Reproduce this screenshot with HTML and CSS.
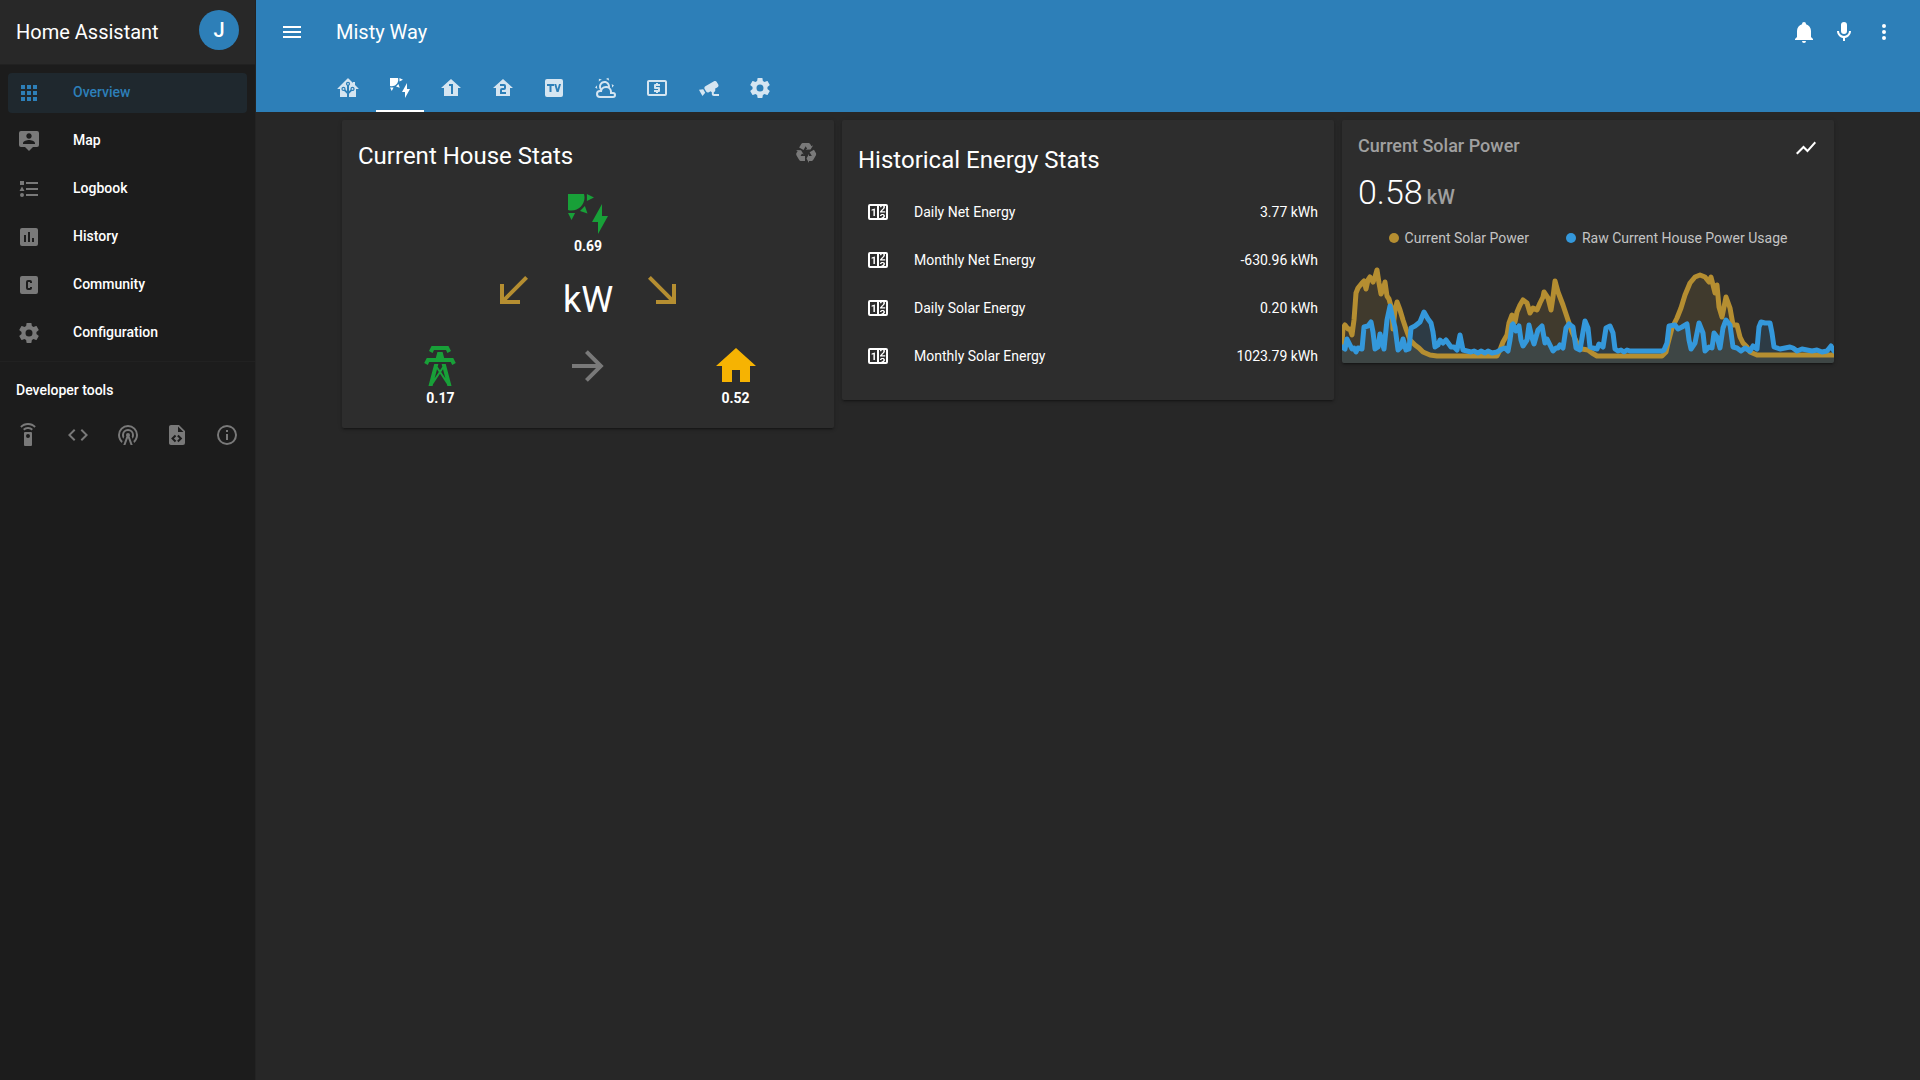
FILE: index.html
```html
<!DOCTYPE html>
<html lang="en">
<head>
<meta charset="utf-8">
<meta name="viewport" content="width=device-width, initial-scale=1">
<title>Misty Way - Home Assistant</title>
<link rel="stylesheet" href="styles.css">
</head>
<body>
<svg class="sprite" aria-hidden="true">
  <symbol id="cog" viewBox="0 0 24 24"><path d="M12,15.5A3.5,3.5 0 0,1 8.5,12A3.5,3.5 0 0,1 12,8.5A3.5,3.5 0 0,1 15.5,12A3.5,3.5 0 0,1 12,15.5M19.43,12.97C19.47,12.65 19.5,12.33 19.5,12C19.5,11.67 19.47,11.34 19.43,11L21.54,9.37C21.73,9.22 21.78,8.95 21.66,8.73L19.66,5.27C19.54,5.05 19.27,4.96 19.05,5.05L16.56,6.05C16.04,5.66 15.5,5.32 14.87,5.07L14.5,2.42C14.46,2.18 14.25,2 14,2H10C9.75,2 9.54,2.18 9.5,2.42L9.13,5.07C8.5,5.32 7.96,5.66 7.44,6.05L4.95,5.05C4.73,4.96 4.46,5.05 4.34,5.27L2.34,8.73C2.21,8.95 2.27,9.22 2.46,9.37L4.57,11C4.53,11.34 4.5,11.67 4.5,12C4.5,12.33 4.53,12.65 4.57,12.97L2.46,14.63C2.27,14.78 2.21,15.05 2.34,15.27L4.34,18.73C4.46,18.95 4.73,19.03 4.95,18.95L7.44,17.94C7.96,18.34 8.5,18.68 9.13,18.93L9.5,21.58C9.54,21.82 9.75,22 10,22H14C14.25,22 14.46,21.82 14.5,21.58L14.87,18.93C15.5,18.67 16.04,18.34 16.56,17.94L19.05,18.95C19.27,19.03 19.54,18.95 19.66,18.73L21.66,15.27C21.78,15.05 21.73,14.78 21.54,14.63L19.43,12.97Z"/></symbol>
  <symbol id="solar" viewBox="0 0 24 24"><path d="M11.45,2V5.55L15,3.77L11.45,2M10.45,8L8,10.46L11.75,11.71L10.45,8M2,11.45L3.77,15L5.55,11.45H2M10,2H2V10C2.57,10.17 3.17,10.25 3.77,10.25C7.35,10.26 10.26,7.35 10.27,3.75C10.26,3.16 10.17,2.57 10,2M17,22V16H14L19,7V13H22L17,22Z"/></symbol>
  <symbol id="counter" viewBox="0 0 24 24"><path d="M4,4H20A2,2 0 0,1 22,6V18A2,2 0 0,1 20,20H4A2,2 0 0,1 2,18V6A2,2 0 0,1 4,4M4,6V18H11V6H4M20,18V6H18.76C19,6.54 18.95,7.07 18.95,7.13C18.88,7.8 18.41,8.5 18.24,8.75L15.91,11.3L19.23,11.28L19.24,12.5L14.04,12.47L14,11.47C14,11.47 17.05,8.24 17.2,7.95C17.34,7.67 17.91,6 16.5,6C15.27,6.05 15.41,7.3 15.41,7.3L13.87,7.31C13.87,7.31 13.88,6.65 14.25,6H13V18H15.58L15.57,17.14L16.54,17.13C16.54,17.13 17.45,16.97 17.46,16.08C17.5,15.08 16.65,15.08 16.5,15.08C16.37,15.08 15.43,15.13 15.43,15.95H13.91C13.91,15.95 13.95,13.89 16.5,13.89C19.1,13.89 18.96,15.91 18.96,15.91C18.96,15.91 19,17.16 17.85,17.63L18.37,18H20M8.92,16H7.42V10.2L5.62,10.76V9.53L8.76,8.41H8.92V16Z"/></symbol>
</svg>

<div class="app">
  <aside class="sidebar">
    <div class="brand">
      <span class="brand-name">Home Assistant</span>
      <a class="avatar" href="#profile">J</a>
    </div>
    <nav class="menu" aria-label="Main">
      <a class="menu-item active" href="#overview"><svg class="icon" viewBox="0 0 24 24"><path d="M16,20H20V16H16M16,14H20V10H16M10,8H14V4H10M16,8H20V4H16M10,14H14V10H10M4,14H8V10H4M4,20H8V16H4M10,20H14V16H10M4,8H8V4H4V8Z"/></svg><span>Overview</span></a>
      <a class="menu-item" href="#map"><svg class="icon" viewBox="0 0 24 24"><path d="M20,2H4A2,2 0 0,0 2,4V16A2,2 0 0,0 4,18H8L12,22L16,18H20A2,2 0 0,0 22,16V4A2,2 0 0,0 20,2M12,4.3C13.5,4.3 14.7,5.5 14.7,7S13.5,9.7 12,9.7S9.3,8.5 9.3,7S10.5,4.3 12,4.3M18,15H6V14.1C6,12.1 10,11 12,11S18,12.1 18,14.1V15Z"/></svg><span>Map</span></a>
      <a class="menu-item" href="#logbook"><svg class="icon" viewBox="0 0 24 24"><path d="M5,9.5L7.5,14H2.5L5,9.5M3,4H7V8H3V4M5,20A2,2 0 0,0 7,18A2,2 0 0,0 5,16A2,2 0 0,0 3,18A2,2 0 0,0 5,20M9,5V7H21V5H9M9,19H21V17H9V19M9,13H21V11H9V13Z"/></svg><span>Logbook</span></a>
      <a class="menu-item" href="#history"><svg class="icon" viewBox="0 0 24 24"><path d="M19,3H5A2,2 0 0,0 3,5V19A2,2 0 0,0 5,21H19A2,2 0 0,0 21,19V5A2,2 0 0,0 19,3M9,17H7V10H9V17M13,17H11V7H13V17M17,17H15V13H17V17Z"/></svg><span>History</span></a>
      <a class="menu-item" href="#community"><svg class="icon" viewBox="0 0 24 24"><path d="M5,3H19A2,2 0 0,1 21,5V19A2,2 0 0,1 19,21H5A2,2 0 0,1 3,19V5A2,2 0 0,1 5,3M11,7A2,2 0 0,0 9,9V15A2,2 0 0,0 11,17H13A2,2 0 0,0 15,15V14H13V15H11V9H13V10H15V9A2,2 0 0,0 13,7H11Z"/></svg><span>Community</span></a>
      <a class="menu-item" href="#config"><svg class="icon"><use href="#cog"/></svg><span>Configuration</span></a>
    </nav>
    <section class="dev">
      <h2 class="dev-title">Developer tools</h2>
      <div class="dev-tools">
        <a href="#services" aria-label="Services"><svg class="icon" viewBox="0 0 24 24"><path d="M12,0C8.96,0 6.21,1.23 4.22,3.22L5.63,4.63C7.26,3 9.5,2 12,2C14.5,2 16.74,3 18.36,4.64L19.77,3.23C17.79,1.23 15.04,0 12,0M7.05,6.05L8.46,7.46C9.37,6.56 10.62,6 12,6C13.38,6 14.63,6.56 15.54,7.46L16.95,6.05C15.68,4.78 13.93,4 12,4C10.07,4 8.32,4.78 7.05,6.05M12,15A2,2 0 0,1 10,13A2,2 0 0,1 12,11A2,2 0 0,1 14,13A2,2 0 0,1 12,15M15,9H9A1,1 0 0,0 8,10V22A1,1 0 0,0 9,23H15A1,1 0 0,0 16,22V10A1,1 0 0,0 15,9Z"/></svg></a>
        <a href="#states" aria-label="States"><svg class="icon" viewBox="0 0 24 24"><path d="M14.6,16.6L19.2,12L14.6,7.4L16,6L22,12L16,18L14.6,16.6M9.4,16.6L4.8,12L9.4,7.4L8,6L2,12L8,18L9.4,16.6Z"/></svg></a>
        <a href="#events" aria-label="Events"><svg class="icon" viewBox="0 0 24 24"><path d="M12,10A2,2 0 0,1 14,12C14,12.5 13.82,12.94 13.53,13.29L16.7,22H14.57L12,14.93L9.43,22H7.3L10.47,13.29C10.18,12.94 10,12.5 10,12A2,2 0 0,1 12,10M12,8A4,4 0 0,0 8,12C8,12.5 8.1,13 8.28,13.46L7.4,15.86C6.53,14.81 6,13.47 6,12A6,6 0 0,1 12,6A6,6 0 0,1 18,12C18,13.47 17.47,14.81 16.6,15.86L15.72,13.46C15.9,13 16,12.5 16,12A4,4 0 0,0 12,8M12,4A8,8 0 0,0 4,12C4,14.36 5,16.5 6.64,17.94L5.92,19.94C3.54,18.11 2,15.23 2,12A10,10 0 0,1 12,2A10,10 0 0,1 22,12C22,15.23 20.46,18.11 18.08,19.94L17.36,17.94C19,16.5 20,14.36 20,12A8,8 0 0,0 12,4Z"/></svg></a>
        <a href="#templates" aria-label="Templates"><svg class="icon" viewBox="0 0 24 24"><path d="M13,9H18.5L13,3.5V9M6,2H14L20,8V20A2,2 0 0,1 18,22H6C4.89,22 4,21.1 4,20V4C4,2.89 4.89,2 6,2M6.12,15.5L9.86,19.24L11.28,17.83L8.95,15.5L11.28,13.17L9.86,11.76L6.12,15.5M17.28,15.5L13.54,11.76L12.12,13.17L14.45,15.5L12.12,17.83L13.54,19.24L17.28,15.5Z"/></svg></a>
        <a href="#info" aria-label="Info"><svg class="icon" viewBox="0 0 24 24"><path d="M11,9H13V7H11M12,20C7.59,20 4,16.41 4,12C4,7.59 7.59,4 12,4C16.41,4 20,7.59 20,12C20,16.41 16.41,20 12,20M12,2A10,10 0 0,0 2,12A10,10 0 0,0 12,22A10,10 0 0,0 22,12A10,10 0 0,0 12,2M11,17H13V11H11V17Z"/></svg></a>
      </div>
    </section>
  </aside>

  <div class="page">
    <header class="header">
      <div class="toolbar">
        <button class="icon-button" type="button" aria-label="Menu"><svg class="icon" viewBox="0 0 24 24"><path d="M3,6H21V8H3V6M3,11H21V13H3V11M3,16H21V18H3V16Z"/></svg></button>
        <h1 class="page-title">Misty Way</h1>
        <button class="icon-button" type="button" aria-label="Notifications"><svg class="icon" viewBox="0 0 24 24"><path d="M21,19V20H3V19L5,17V11C5,7.9 7.03,5.17 10,4.29C10,4.19 10,4.1 10,4A2,2 0 0,1 12,2A2,2 0 0,1 14,4C14,4.1 14,4.19 14,4.29C16.97,5.17 19,7.9 19,11V17L21,19M14,21A2,2 0 0,1 12,23A2,2 0 0,1 10,21"/></svg></button>
        <button class="icon-button" type="button" aria-label="Voice"><svg class="icon" viewBox="0 0 24 24"><path d="M12,2A3,3 0 0,1 15,5V11A3,3 0 0,1 12,14A3,3 0 0,1 9,11V5A3,3 0 0,1 12,2M19,11C19,14.53 16.39,17.44 13,17.93V21H11V17.93C7.61,17.44 5,14.53 5,11H7A5,5 0 0,0 12,16A5,5 0 0,0 17,11H19Z"/></svg></button>
        <button class="icon-button" type="button" aria-label="More"><svg class="icon" viewBox="0 0 24 24"><path d="M12,16A2,2 0 0,1 14,18A2,2 0 0,1 12,20A2,2 0 0,1 10,18A2,2 0 0,1 12,16M12,10A2,2 0 0,1 14,12A2,2 0 0,1 12,14A2,2 0 0,1 10,12A2,2 0 0,1 12,10M12,4A2,2 0 0,1 14,6A2,2 0 0,1 12,8A2,2 0 0,1 10,6A2,2 0 0,1 12,4Z"/></svg></button>
      </div>
      <nav class="tabs" aria-label="Views">
        <a class="tab" href="#home" aria-label="Home"><svg class="icon" viewBox="0 0 24 24"><path d="M21.8,13H20V21H13V17.67L15.79,14.88L16.5,15C17.66,15 18.6,14.06 18.6,12.9C18.6,11.74 17.66,10.8 16.5,10.8A2.1,2.1 0 0,0 14.4,12.9L14.5,13.61L13,15.13V9.65C13.66,9.29 14.1,8.6 14.1,7.8A2.1,2.1 0 0,0 12,5.7A2.1,2.1 0 0,0 9.9,7.8C9.9,8.6 10.34,9.29 11,9.65V15.13L9.5,13.61L9.6,12.9A2.1,2.1 0 0,0 7.5,10.8A2.1,2.1 0 0,0 5.4,12.9A2.1,2.1 0 0,0 7.5,15L8.21,14.88L11,17.67V21H4V13H2.25C1.83,13 1.42,13 1.42,12.79C1.43,12.57 1.85,12.15 2.28,11.72L11,3C11.33,2.67 11.67,2.33 12,2.33C12.33,2.33 12.67,2.67 13,3L17,7V6H19V9L21.78,11.78C22.18,12.18 22.59,12.59 22.6,12.8C22.6,13 22.2,13 21.8,13M7.5,12A0.9,0.9 0 0,1 8.4,12.9A0.9,0.9 0 0,1 7.5,13.8A0.9,0.9 0 0,1 6.6,12.9A0.9,0.9 0 0,1 7.5,12M16.5,12C17,12 17.4,12.4 17.4,12.9C17.4,13.4 17,13.8 16.5,13.8A0.9,0.9 0 0,1 15.6,12.9A0.9,0.9 0 0,1 16.5,12M12,6.9C12.5,6.9 12.9,7.3 12.9,7.8C12.9,8.3 12.5,8.7 12,8.7C11.5,8.7 11.1,8.3 11.1,7.8C11.1,7.3 11.5,6.9 12,6.9Z"/></svg></a>
        <a class="tab selected" href="#energy" aria-label="Energy" aria-current="page"><svg class="icon"><use href="#solar"/></svg></a>
        <a class="tab" href="#floor1" aria-label="First floor"><svg class="icon" viewBox="0 0 24 24"><path d="M12,3L2,12H5V20H19V12H22L12,3M10,8H14V18H12V10H10V8Z"/></svg></a>
        <a class="tab" href="#floor2" aria-label="Second floor"><svg class="icon" viewBox="0 0 24 24"><path d="M12,3L2,12H5V20H19V12H22L12,3M9,8H13A2,2 0 0,1 15,10V12A2,2 0 0,1 13,14H11V16H15V18H9V14A2,2 0 0,1 11,12H13V10H9V8Z"/></svg></a>
        <a class="tab" href="#media" aria-label="Media"><svg class="icon" viewBox="0 0 24 24"><path fill-rule="evenodd" d="M5,3H19A2,2 0 0,1 21,5V19A2,2 0 0,1 19,21H5A2,2 0 0,1 3,19V5A2,2 0 0,1 5,3M5,8V10H7.5V16H9.5V10H12V8H5M12.2,8L14.6,16H16.6L19,8H17L15.6,13L14.2,8H12.2Z"/></svg></a>
        <a class="tab" href="#weather" aria-label="Weather"><svg class="icon" viewBox="0 0 24 24"><path d="M12.74,5.47C15.1,6.5 16.35,9.03 15.92,11.46C17.19,12.56 18,14.19 18,16V16.17C18.31,16.06 18.65,16 19,16A3,3 0 0,1 22,19A3,3 0 0,1 19,22H6A4,4 0 0,1 2,18A4,4 0 0,1 6,14H6.27C5,12.45 4.6,10.24 5.5,8.26C6.72,5.5 9.97,4.24 12.74,5.47M11.93,7.3C10.16,6.5 8.09,7.31 7.31,9.07C6.85,10.09 6.93,11.22 7.41,12.13C8.5,10.83 10.16,10 12,10C12.7,10 13.38,10.12 14,10.34C13.94,9.06 13.18,7.86 11.93,7.3M13.55,3.64C13,3.4 12.45,3.23 11.88,3.12L14.37,1.82L15.27,4.71C14.76,4.29 14.19,3.93 13.55,3.64M6.09,4.44C5.6,4.79 5.17,5.19 4.8,5.63L4.91,2.82L7.87,3.5C7.25,3.71 6.65,4.03 6.09,4.44M18,9.71C17.91,9.12 17.78,8.55 17.59,8L19.97,9.5L17.92,11.73C18.03,11.08 18.05,10.4 18,9.71M3.04,11.3C3.11,11.9 3.24,12.47 3.43,13L1.06,11.5L3.1,9.28C2.97,9.93 2.97,10.61 3.04,11.3M19,18H16V16A4,4 0 0,0 12,12A4,4 0 0,0 8,16H6A2,2 0 0,0 4,18A2,2 0 0,0 6,20H19A1,1 0 0,0 20,19A1,1 0 0,0 19,18Z"/></svg></a>
        <a class="tab" href="#money" aria-label="Money"><svg class="icon" viewBox="0 0 24 24"><path d="M20,18H4V6H20M20,4H4C2.89,4 2,4.89 2,6V18A2,2 0 0,0 4,20H20A2,2 0 0,0 22,18V6C22,4.89 21.1,4 20,4M11,17H13V16H14A1,1 0 0,0 15,15V12A1,1 0 0,0 14,11H11V10H15V8H13V7H11V8H10A1,1 0 0,0 9,9V12A1,1 0 0,0 10,13H13V14H9V16H11V17Z"/></svg></a>
        <a class="tab" href="#cameras" aria-label="Cameras"><svg class="icon" viewBox="0 0 24 24"><path d="M18.15,4.94C17.77,4.91 17.37,5 17,5.2L8.35,10.2C7.39,10.76 7.07,12 7.62,12.94L9.12,15.53C9.67,16.5 10.89,16.82 11.85,16.27L13.65,15.23C13.92,15.69 14.32,16.06 14.81,16.27V18.04C14.81,19.13 15.7,20 16.81,20H22V18.04H16.81V16.27C17.72,15.87 18.31,14.97 18.31,14C18.31,13.54 18.19,13.11 17.97,12.73L20.5,11.27C21.47,10.71 21.8,9.5 21.24,8.53L19.74,5.94C19.4,5.34 18.79,5 18.15,4.94M6.22,13.17L2,13.87L2.75,15.17L4.75,18.63L5.5,19.93L8.22,16.63L6.22,13.17Z"/></svg></a>
        <a class="tab" href="#settings" aria-label="Settings"><svg class="icon"><use href="#cog"/></svg></a>
      </nav>
    </header>

    <main class="cards">
      <section class="card house">
        <div class="house-head">
          <h2 class="card-title">Current House Stats</h2>
          <svg class="icon muted" viewBox="0 0 24 24"><path d="M21.82,15.42L19.32,19.75C18.83,20.61 17.92,21.06 17,21H15V23L12.5,18.5L15,14V16H17.82L15.6,12.15L19.93,9.65L21.73,12.77C22.25,13.54 22.32,14.57 21.82,15.42M9.21,3.06H14.21C15.19,3.06 16.04,3.63 16.45,4.45L17.45,6.19L19.18,5.19L16.54,9.6L11.39,9.69L13.12,8.69L11.71,6.24L9.5,10.09L5.16,7.59L6.96,4.47C7.37,3.64 8.22,3.06 9.21,3.06M5.05,19.76L2.55,15.43C2.06,14.58 2.13,13.56 2.64,12.79L3.64,11.06L1.91,10.06L7.05,10.14L9.7,14.56L7.97,13.56L6.56,16H11V21H7.4C6.47,21.07 5.55,20.61 5.05,19.76Z"/></svg>
        </div>
        <div class="flow">
          <div class="node solar"><svg class="big green"><use href="#solar"/></svg><span>0.69</span></div>
          <svg class="big gold to-grid" viewBox="0 0 24 24"><path d="M19,6.41L17.59,5L7,15.59V9H5V19H15V17H8.41L19,6.41Z"/></svg>
          <span class="unit">kW</span>
          <svg class="big gold to-house" viewBox="0 0 24 24"><path d="M5,6.41L6.41,5L17,15.59V9H19V19H9V17H15.59L5,6.41Z"/></svg>
          <div class="node grid"><svg class="big green" viewBox="0 0 24 24"><path d="M8.28,5.45L6.5,4.55L7.76,2H16.23L17.5,4.55L15.72,5.44L15,4H9L8.28,5.45M18.62,8H14.09L13.3,5H10.7L9.91,8H5.38L4.1,10.55L5.89,11.44L6.62,10H17.38L18.1,11.45L19.89,10.56L18.62,8M17.77,22H15.7L15.46,21.1L12,15.9L8.53,21.1L8.3,22H6.23L9.12,11H11.19L10.83,12.35L12,14.1L13.16,12.35L12.81,11H14.88L17.77,22M11.4,15L10.5,13.65L9.32,18.13L11.4,15M14.68,18.12L13.5,13.64L12.6,15L14.68,18.12Z"/></svg><span>0.17</span></div>
          <svg class="big muted grid-to-house" viewBox="0 0 24 24"><path d="M4,11V13H16L10.5,18.5L11.92,19.92L19.84,12L11.92,4.08L10.5,5.5L16,11H4Z"/></svg>
          <div class="node home"><svg class="big amber" viewBox="0 0 24 24"><path d="M10,20V14H14V20H19V12H22L12,3L2,12H5V20H10Z"/></svg><span>0.52</span></div>
        </div>
      </section>

      <section class="card history">
        <h2 class="card-title">Historical Energy Stats</h2>
        <ul class="entities">
          <li><svg class="icon"><use href="#counter"/></svg><span>Daily Net Energy</span><span class="value">3.77 kWh</span></li>
          <li><svg class="icon"><use href="#counter"/></svg><span>Monthly Net Energy</span><span class="value">-630.96 kWh</span></li>
          <li><svg class="icon"><use href="#counter"/></svg><span>Daily Solar Energy</span><span class="value">0.20 kWh</span></li>
          <li><svg class="icon"><use href="#counter"/></svg><span>Monthly Solar Energy</span><span class="value">1023.79 kWh</span></li>
        </ul>
      </section>

      <section class="card power">
        <div class="power-head">
          <h2 class="power-name">Current Solar Power</h2>
          <svg class="icon" viewBox="0 0 24 24"><path d="M3.5,18.5L9.5,12.5L13.5,16.5L22,6.92L20.59,5.5L13.5,13.5L9.5,9.5L2,17L3.5,18.5Z"/></svg>
        </div>
        <p class="power-state">0.58<span class="power-unit">kW</span></p>
        <ul class="legend">
          <li class="legend-solar">Current Solar Power</li>
          <li class="legend-usage">Raw Current House Power Usage</li>
        </ul>
        <svg class="chart" viewBox="0 0 492 100" preserveAspectRatio="none" role="img" aria-label="Solar power and house usage over time">
          <defs>
            <path id="solar-line" d="M0,80L1,65L3,62L6,66L8,66L10,72L12,57L14,30L16,25L20,20L22,18L24,26L26,17L28,14L31,19L33,14L35,7L37,20L39,31L41,27L43,19L45,33L47,36L50,47L51,66L53,47L55,39L58,47L61,57L64,66L68,77L73,82L77,85L81,89L88,92L95,93H155L158,87L161,79L165,72L167,60L170,52L173,59L175,49L178,42L181,37L185,40L188,50L191,45L195,47L198,40L201,34L202,29L206,35L209,47L211,34L213,18L216,29L221,42L226,57L230,69L235,80L240,86L246,87L250,90L255,93H320L324,89L326,80L330,65L335,55L339,45L343,32L348,20L353,14L358,12L363,14L367,19L369,14L373,30L375,22L377,44L380,54L382,44L384,34L388,45L391,62L395,62L398,74L401,80L405,84L408,89L415,92H492"/>
            <path id="usage-line" d="M0,84L3,86L5,76L8,82L10,86L12,85L14,89L16,85L20,86L22,64L26,63L29,59L31,69L33,86L36,84L38,71L42,86L45,57L48,43L50,52L53,64L56,87L59,84L61,76L64,87L67,86L69,65L73,63L78,59L82,49L86,56L89,60L91,69L93,84L96,82L98,77L101,80L104,77L109,84L112,84L115,87L118,72L121,87L125,88L129,89L132,88L136,90L139,88L143,90L146,88L150,90L155,89L160,86L163,85L166,88L168,77L170,62L171,61L174,68L177,63L179,77L181,83L185,77L187,62L190,75L192,81L196,67L200,63L203,80L205,76L209,84L211,88L214,85L216,85L218,82L221,85L224,65L227,61L231,64L234,85L238,87L241,69L243,58L246,65L248,84L251,85L255,86L257,81L261,84L264,65L268,63L271,70L273,86L276,88L279,87L282,89L285,87L288,88L320,88L322,87L325,80L327,63L333,62L336,66L340,64L345,61L347,77L349,86L353,80L357,60L361,70L363,88L367,84L370,85L372,70L375,74L378,85L381,65L384,57L388,62L391,84L395,85L399,88L403,85L408,88L411,83L415,86L417,64L419,59L423,60L428,60L430,70L432,84L438,86L443,85L448,84L451,85L455,88L460,86L465,87L470,88L475,87L480,89L485,88L489,83L492,88"/>
            <clipPath id="solar-clip"><path d="M0,80L1,65L3,62L6,66L8,66L10,72L12,57L14,30L16,25L20,20L22,18L24,26L26,17L28,14L31,19L33,14L35,7L37,20L39,31L41,27L43,19L45,33L47,36L50,47L51,66L53,47L55,39L58,47L61,57L64,66L68,77L73,82L77,85L81,89L88,92L95,93H155L158,87L161,79L165,72L167,60L170,52L173,59L175,49L178,42L181,37L185,40L188,50L191,45L195,47L198,40L201,34L202,29L206,35L209,47L211,34L213,18L216,29L221,42L226,57L230,69L235,80L240,86L246,87L250,90L255,93H320L324,89L326,80L330,65L335,55L339,45L343,32L348,20L353,14L358,12L363,14L367,19L369,14L373,30L375,22L377,44L380,54L382,44L384,34L388,45L391,62L395,62L398,74L401,80L405,84L408,89L415,92H492V100H0Z"/></clipPath>
            <clipPath id="usage-clip"><path d="M0,84L3,86L5,76L8,82L10,86L12,85L14,89L16,85L20,86L22,64L26,63L29,59L31,69L33,86L36,84L38,71L42,86L45,57L48,43L50,52L53,64L56,87L59,84L61,76L64,87L67,86L69,65L73,63L78,59L82,49L86,56L89,60L91,69L93,84L96,82L98,77L101,80L104,77L109,84L112,84L115,87L118,72L121,87L125,88L129,89L155,89L160,86L163,85L166,88L168,77L170,62L171,61L174,68L177,63L179,77L181,83L185,77L187,62L190,75L192,81L196,67L200,63L203,80L205,76L209,84L211,88L214,85L216,85L218,82L221,85L224,65L227,61L231,64L234,85L238,87L241,69L243,58L246,65L248,84L251,85L255,86L257,81L261,84L264,65L268,63L271,70L273,86L276,88L320,88L322,87L325,80L327,63L333,62L336,66L340,64L345,61L347,77L349,86L353,80L357,60L361,70L363,88L367,84L370,85L372,70L375,74L378,85L381,65L384,57L388,62L391,84L395,85L399,88L403,85L408,88L411,83L415,86L417,64L419,59L423,60L428,60L430,70L432,84L438,86L448,84L455,88L485,88L489,83L492,88V100H0Z"/></clipPath>
          </defs>
          <rect class="area-solar" width="492" height="100" clip-path="url(#solar-clip)"/>
          <rect class="area-usage" width="492" height="100" clip-path="url(#usage-clip)"/>
          <use class="line-solar" href="#solar-line"/>
          <use class="line-usage" href="#usage-line"/>
        </svg>
      </section>
    </main>
  </div>
</div>
</body>
</html>
```

FILE: styles.css
```css
:root {
  --primary: #2d7fb8;
  --page: #272727;
  --card: #2d2d2d;
  --sidebar: #1c1c1c;
  --muted: #797979;
  --gold: #b58e31;
  --blue: #3498db;
}

* {
  box-sizing: border-box;
}

body {
  margin: 0;
  background: var(--page);
  color: #fff;
  font: 400 14px/20px Roboto, "Noto Sans", sans-serif;
}

h1, h2, p, ul {
  margin: 0;
  padding: 0;
  list-style: none;
}

a {
  color: inherit;
  text-decoration: none;
}

.sprite {
  display: none;
}

.icon {
  display: block;
  flex: none;
  width: 24px;
  height: 24px;
  fill: currentColor;
}

.app {
  display: grid;
  grid-template-columns: 256px minmax(0, 1fr);
  min-height: 100vh;
}

/* Sidebar */

.sidebar {
  background: var(--sidebar);
  border-right: 1px solid #232323;
}

.brand {
  display: flex;
  align-items: center;
  justify-content: space-between;
  height: 65px;
  padding: 0 16px 4px;
  border-bottom: 1px solid #212121;
  background: #282828;
}

.brand-name {
  padding-top: 4px;
  font-size: 20px;
}

.avatar {
  width: 40px;
  border-radius: 50%;
  background: var(--primary);
  font-size: 20px;
  font-weight: 500;
  line-height: 40px;
  text-align: center;
}

.menu {
  display: grid;
  gap: 8px;
  padding: 8px;
  border-bottom: 1px solid #212121;
}

.menu-item {
  display: flex;
  align-items: center;
  gap: 32px;
  height: 40px;
  padding: 0 9px;
  border-radius: 4px;
  font-weight: 500;
}

.menu-item span {
  padding-bottom: 2px;
}

.menu-item .icon,
.dev-tools .icon {
  color: var(--muted);
}

.menu-item.active {
  background: #1f282e;
  color: var(--primary);
}

.menu-item.active .icon {
  color: inherit;
}

.dev {
  padding: 18px 16px;
}

.dev-title {
  font-size: 14px;
  font-weight: 500;
}

.dev-tools {
  display: flex;
  justify-content: space-between;
  padding-top: 23px;
}

/* Header */

.header {
  background: var(--primary);
}

.toolbar {
  display: flex;
  align-items: center;
  height: 64px;
  padding: 0 16px;
}

.page-title {
  flex: 1;
  margin-left: 24px;
  font-size: 20px;
  font-weight: 400;
}

.icon-button {
  padding: 8px;
  border: 0;
  background: none;
  color: #fff;
}

.tabs {
  display: flex;
  justify-content: space-between;
  width: 460px;
  max-width: 100%;
  height: 48px;
  margin-left: 68px;
}

.tab {
  height: 48px;
  padding: 12px 12px 0;
  color: #d5e5f1;
}

.tab.selected {
  border-bottom: 2px solid #fff;
  color: #fff;
}

/* Cards */

.cards {
  display: grid;
  grid-template-columns: repeat(3, minmax(0, 1fr));
  align-items: start;
  gap: 8px;
  max-width: 1508px;
  margin: 0 auto;
  padding: 8px;
}

.card {
  overflow: hidden;
  border-radius: 2px;
  background: var(--card);
  box-shadow: 0 2px 2px rgba(0, 0, 0, .14), 0 1px 5px rgba(0, 0, 0, .12), 0 3px 1px -2px rgba(0, 0, 0, .2);
}

.card-title {
  font-size: 24px;
  font-weight: 400;
  line-height: 32px;
}

.house-head {
  display: flex;
  align-items: flex-start;
  justify-content: space-between;
  padding: 20px 16px 18px;
}

.green { color: #18a038; }
.gold { color: var(--gold); }
.amber { color: #f6b302; }
.muted { color: var(--muted); }

.big {
  display: block;
  width: 48px;
  height: 48px;
  fill: currentColor;
}

.flow {
  display: grid;
  grid-template-columns: repeat(5, 15%);
  grid-template-rows: repeat(3, 76px);
  justify-content: center;
  justify-items: center;
  padding-bottom: 10px;
}

.node {
  display: grid;
  justify-items: center;
  align-content: start;
  font-weight: 700;
}

.node span {
  line-height: 16px;
}

.solar { grid-area: 1 / 3; }
.to-grid { grid-area: 2 / 2; }
.unit { grid-area: 2 / 3; }
.to-house { grid-area: 2 / 4; }
.grid { grid-area: 3 / 1; }
.grid-to-house { grid-area: 3 / 3; }
.home { grid-area: 3 / 5; }

.unit {
  font-size: 36px;
  line-height: 68px;
}

.history .card-title {
  padding: 24px 16px 16px;
}

.entities {
  display: grid;
  gap: 8px;
  padding: 0 16px 24px;
}

.entities li {
  display: flex;
  align-items: center;
  height: 40px;
  padding-left: 8px;
}

.entities .icon {
  margin-right: 24px;
}

.value {
  margin-left: auto;
}

.power-head {
  display: flex;
  align-items: flex-start;
  justify-content: space-between;
  padding: 16px 16px 0;
}

.power-name {
  color: #a0a0a0;
  font-size: 18px;
  font-weight: 500;
}

.power-state {
  padding: 12px 16px 0;
  font-size: 34px;
  font-weight: 300;
  line-height: 40px;
}

.power-unit {
  margin-left: 4px;
  color: #a0a0a0;
  font-size: 20px;
  font-weight: 500;
  line-height: 20px;
}

.legend {
  display: flex;
  justify-content: center;
  gap: 37px;
  padding-top: 16px;
  color: #c4c4c4;
}

.legend li {
  display: flex;
  align-items: center;
  gap: 6px;
}

.legend li::before {
  width: 10px;
  height: 10px;
  border-radius: 50%;
  content: "";
}

.legend-solar::before { background: var(--gold); }
.legend-usage::before { background: var(--blue); }

.chart {
  display: block;
  width: 100%;
  height: 100px;
  margin-top: 15px;
}

.line-solar,
.line-usage {
  fill: none;
  stroke-width: 5px;
  stroke-linecap: round;
  stroke-linejoin: round;
}

.line-solar { stroke: var(--gold); }
.line-usage { stroke: var(--blue); }
.area-solar { fill: var(--gold); opacity: .14; }
.area-usage { fill: var(--blue); opacity: .14; }

@media (max-width: 1100px) {
  .cards {
    grid-template-columns: minmax(0, 500px);
    justify-content: center;
  }
}
```
